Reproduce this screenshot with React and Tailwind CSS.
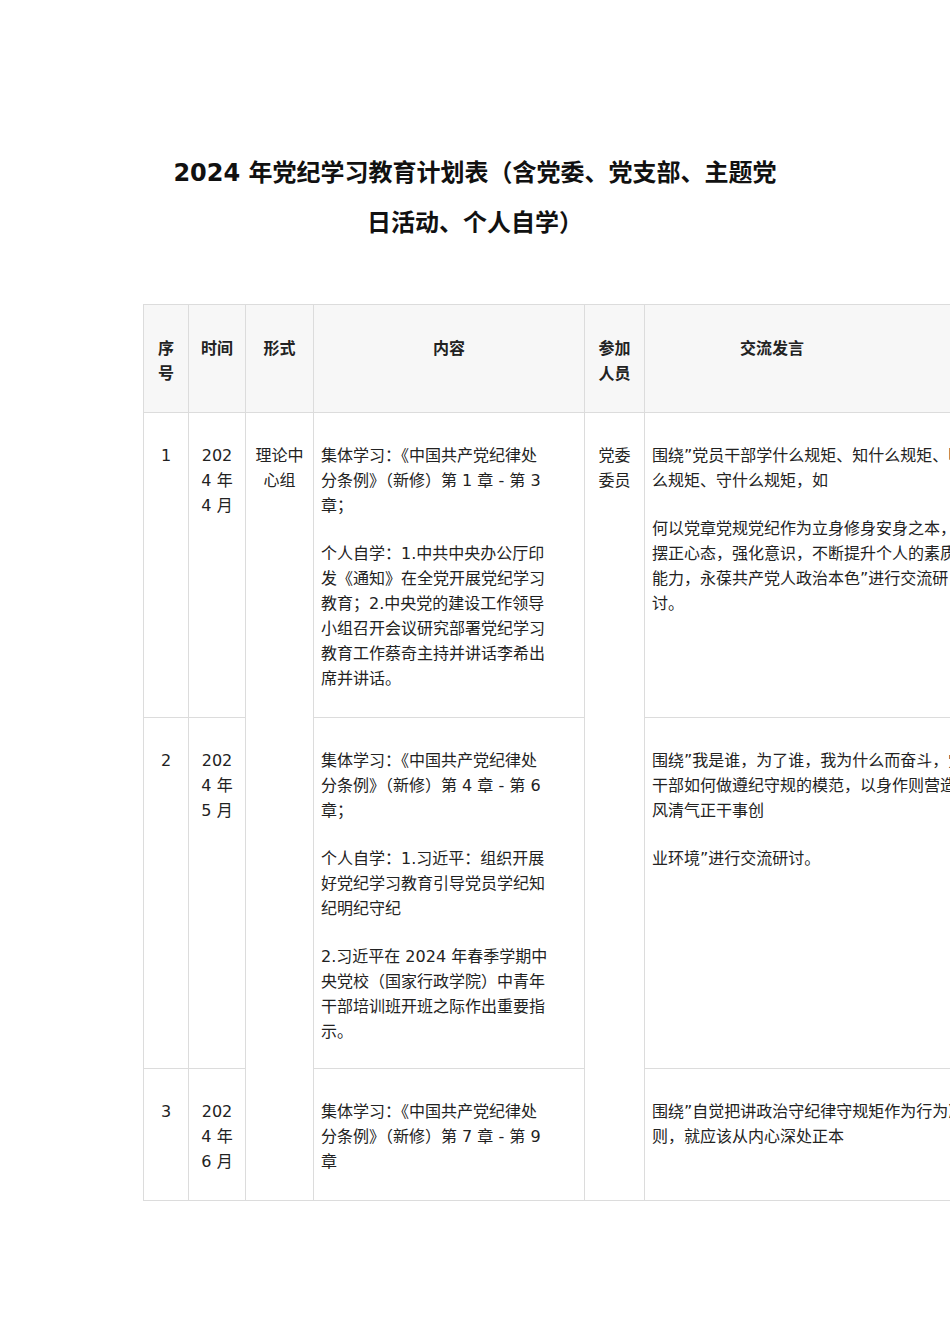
import React from "react";

const font = { fontFamily: '"DejaVu Sans", "Noto Sans CJK SC", sans-serif' };

const Para = ({ children }) => <p className="mb-[23px] last:mb-0">{children}</p>;

export default function App() {
  const td = "border border-[#dcdcdc] align-top px-[7px] pt-[30px] whitespace-nowrap";
  const th = "border border-[#dcdcdc] bg-[#f7f7f7] font-bold text-center align-top px-[7px] pt-[31px]";
  return (
    <div className="w-[950px] h-[1344px] bg-white overflow-hidden text-[16px] leading-[25px] text-[#222]" style={font}>
      <h1 className="mt-[148px] mx-auto w-[700px] text-center font-bold text-[24px] leading-[50px] text-[#111]">
        2024 年党纪学习教育计划表（含党委、党支部、主题党<br />日活动、个人自学）
      </h1>
      <div className="mt-[56px] ml-[143px] w-[807px] overflow-hidden">
        <table className="border-collapse table-fixed w-[900px]">
          <colgroup>
            <col className="w-[45px]" />
            <col className="w-[57px]" />
            <col className="w-[68px]" />
            <col className="w-[271px]" />
            <col className="w-[60px]" />
            <col />
          </colgroup>
          <tbody>
            <tr className="h-[108px]">
              <th className={th}>序<br />号</th>
              <th className={th}>时间</th>
              <th className={th}>形式</th>
              <th className={th}>内容</th>
              <th className={th}>参加<br />人员</th>
              <th className={th + " pr-[150px]"}>交流发言</th>
            </tr>
            <tr className="h-[305px]">
              <td className={td + " text-center"}>1</td>
              <td className={td + " text-center"}>202<br />4 年<br />4 月</td>
              <td className={td + " text-center"} rowSpan={3}>理论中<br />心组</td>
              <td className={td}>
                <Para>集体学习：《中国共产党纪律处<br />分条例》（新修）第 1 章 - 第 3<br />章；</Para>
                <Para>个人自学：1.中共中央办公厅印<br />发《通知》在全党开展党纪学习<br />教育；2.中央党的建设工作领导<br />小组召开会议研究部署党纪学习<br />教育工作蔡奇主持并讲话李希出<br />席并讲话。</Para>
              </td>
              <td className={td + " text-center"} rowSpan={3}>党委<br />委员</td>
              <td className={td}>
                <Para>围绕”党员干部学什么规矩、知什么规矩、明什<br />么规矩、守什么规矩，如</Para>
                <Para>何以党章党规党纪作为立身修身安身之本，<br />摆正心态，强化意识，不断提升个人的素质<br />能力，永葆共产党人政治本色”进行交流研<br />讨。</Para>
              </td>
            </tr>
            <tr className="h-[351px]">
              <td className={td + " text-center"}>2</td>
              <td className={td + " text-center"}>202<br />4 年<br />5 月</td>
              <td className={td}>
                <Para>集体学习：《中国共产党纪律处<br />分条例》（新修）第 4 章 - 第 6<br />章；</Para>
                <Para>个人自学：1.习近平：组织开展<br />好党纪学习教育引导党员学纪知<br />纪明纪守纪</Para>
                <Para>2.习近平在 2024 年春季学期中<br />央党校（国家行政学院）中青年<br />干部培训班开班之际作出重要指<br />示。</Para>
              </td>
              <td className={td}>
                <Para>围绕”我是谁，为了谁，我为什么而奋斗，党员<br />干部如何做遵纪守规的模范，以身作则营造<br />风清气正干事创</Para>
                <Para>业环境”进行交流研讨。</Para>
              </td>
            </tr>
            <tr className="h-[132px]">
              <td className={td + " text-center"}>3</td>
              <td className={td + " text-center"}>202<br />4 年<br />6 月</td>
              <td className={td}>集体学习：《中国共产党纪律处<br />分条例》（新修）第 7 章 - 第 9<br />章</td>
              <td className={td}>围绕”自觉把讲政治守纪律守规矩作为行为准<br />则，就应该从内心深处正本</td>
            </tr>
          </tbody>
        </table>
      </div>
    </div>
  );
}
